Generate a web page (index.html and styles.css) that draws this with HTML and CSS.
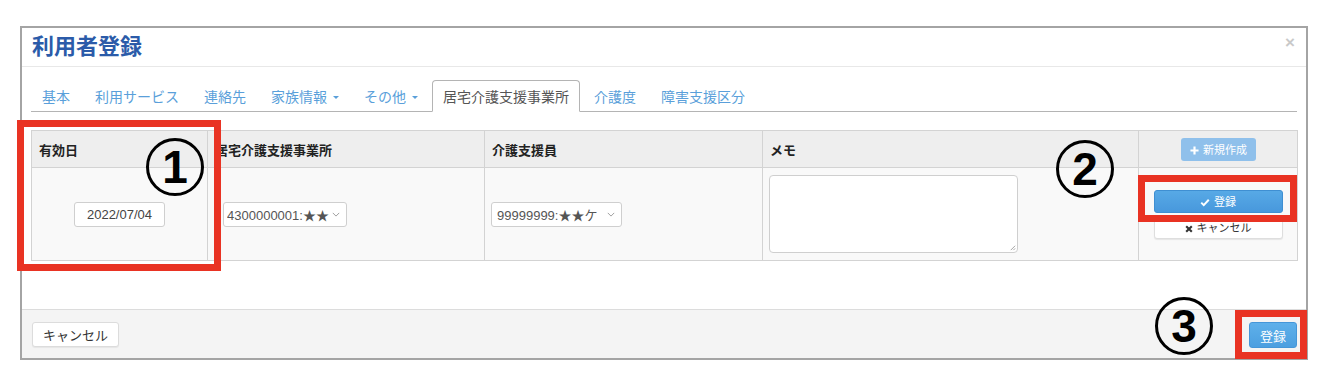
FILE: index.html
```html
<!DOCTYPE html>
<html lang="ja">
<head>
<meta charset="utf-8">
<title>利用者登録</title>
<link rel="stylesheet" href="styles.css">
</head>
<body>
<div class="modal">
  <div class="modal-header">
    <h1 class="title">利用者登録</h1>
    <span class="close">×</span>
  </div>
  <div class="modal-body">
    <ul class="tabs">
      <li><a>基本</a></li>
      <li><a>利用サービス</a></li>
      <li><a>連絡先</a></li>
      <li><a>家族情報<span class="caret"></span></a></li>
      <li><a>その他<span class="caret"></span></a></li>
      <li class="active"><a>居宅介護支援事業所</a></li>
      <li><a>介護度</a></li>
      <li><a>障害支援区分</a></li>
    </ul>
    <table class="grid">
      <colgroup>
        <col class="c1"><col class="c2"><col class="c3"><col class="c4"><col class="c5">
      </colgroup>
      <thead>
        <tr>
          <th>有効日</th>
          <th>居宅介護支援事業所</th>
          <th>介護支援員</th>
          <th>メモ</th>
          <th class="act"><button class="btn-new"><svg class="ico" viewBox="0 0 10 10" width="9" height="9"><path d="M5 0.5v9M0.5 5h9" stroke="#fff" stroke-width="2.4"/></svg>新規作成</button></th>
        </tr>
      </thead>
      <tbody>
        <tr>
          <td class="center"><div class="date">2022/07/04</div></td>
          <td><div class="select sel1"><span>4300000001:★★</span><svg viewBox="0 0 10 6" width="8" height="5"><path d="M1 1l4 4 4-4" fill="none" stroke="#888" stroke-width="1"/></svg></div></td>
          <td><div class="select sel2"><span>99999999:★★ケ</span><svg viewBox="0 0 10 6" width="8" height="5"><path d="M1 1l4 4 4-4" fill="none" stroke="#888" stroke-width="1"/></svg></div></td>
          <td><div class="memo"><svg class="grip" viewBox="0 0 8 8" width="7" height="7"><path d="M7 2L2 7M7 5L5 7" stroke="#999" stroke-width="1"/></svg></div></td>
          <td class="act">
            <div class="act-stack">
              <button class="btn-save"><svg class="ico" viewBox="0 0 12 10" width="10" height="9"><path d="M1.5 5.2l3 3 6-6.5" fill="none" stroke="#fff" stroke-width="2.4"/></svg>登録</button>
              <button class="btn-cancel"><svg class="ico" viewBox="0 0 10 10" width="8" height="8"><path d="M1.5 1.5l7 7M8.5 1.5l-7 7" stroke="#333" stroke-width="2.6"/></svg>キャンセル</button>
            </div>
          </td>
        </tr>
      </tbody>
    </table>
  </div>
  <div class="modal-footer">
    <button class="btn">キャンセル</button>
    <button class="btn btn-primary">登録</button>
  </div>
</div>

<div class="mark box1"></div>
<div class="mark box2"></div>
<div class="mark box3"></div>
<div class="num n1">1</div>
<div class="num n2">2</div>
<div class="num n3">3</div>
</body>
</html>
```

FILE: styles.css
```css
* { box-sizing: border-box; }
html, body { margin: 0; padding: 0; background: #fff; }
body {
  position: relative;
  width: 1328px;
  height: 380px;
  font-family: "Liberation Sans", "Noto Sans CJK JP", sans-serif;
  color: #333;
  overflow: hidden;
}

.modal {
  margin: 26px 0 0 20px;
  width: 1288px;
  height: 334px;
  border: 2px solid #a4a4a4;
  display: flex;
  flex-direction: column;
  background: #fff;
}

.modal-header {
  height: 39px;
  border-bottom: 1px solid #e8e8e8;
  padding: 1px 10px 0 10px;
  display: flex;
  justify-content: space-between;
  align-items: flex-start;
}
.title {
  margin: 0;
  font-size: 22px;
  line-height: 30px;
  font-weight: bold;
  color: #2b5ba9;
  font-family: "Noto Sans CJK JP", sans-serif;
}
.close {
  font-size: 17px;
  line-height: 28px;
  font-weight: bold;
  color: #c9c9c9;
  margin-right: 1px;
}

.modal-body {
  padding: 13px 9px 0 9px;
}

.tabs {
  list-style: none;
  margin: 0;
  padding: 0;
  display: flex;
  border-bottom: 1px solid #b4b4b4;
  height: 32px;
}
.tabs li { margin-right: 3px; }
.tabs a {
  display: block;
  line-height: 30px;
  padding: 0 10px;
  border: 1px solid transparent;
  border-radius: 4px 4px 0 0;
  font-size: 14px;
  color: #5a9fda;
  font-family: "Noto Sans CJK JP", sans-serif;
}
.tabs .active a {
  border-color: #b4b4b4;
  border-bottom-color: #fff;
  background: #fff;
  color: #555;
  height: 32px;
}
.caret {
  display: inline-block;
  width: 0;
  height: 0;
  margin-left: 6px;
  vertical-align: 3px;
  border-top: 3px solid #5a9fda;
  border-left: 3px solid transparent;
  border-right: 3px solid transparent;
}

.grid {
  margin-top: 18px;
  width: 1266px;
  border-collapse: collapse;
  table-layout: fixed;
}
.c1 { width: 176px; }
.c2 { width: 277px; }
.c3 { width: 278px; }
.c4 { width: 376px; }
.c5 { width: 159px; }
.grid th, .grid td {
  border: 1px solid #d3d3d3;
  vertical-align: middle;
}
.grid th {
  height: 37px;
  background: #eeeeee;
  text-align: left;
  padding: 0 7px;
  font-size: 13px;
  font-weight: bold;
  color: #222;
  font-family: "Noto Sans CJK JP", sans-serif;
}
.grid td {
  height: 93px;
  background: #f9f9f9;
  padding: 0 6px;
}
.grid .center { text-align: center; }
.grid .act { text-align: center; padding: 0; }

.date {
  display: inline-block;
  width: 91px;
  height: 25px;
  line-height: 23px;
  border: 1px solid #cfcfcf;
  border-radius: 3px;
  background: #fff;
  font-size: 13px;
  color: #444;
  text-align: center;
}

.select {
  display: inline-flex;
  align-items: center;
  justify-content: space-between;
  height: 25px;
  border: 1px solid #cfcfcf;
  border-radius: 3px;
  background: #fff;
  font-size: 13px;
  color: #555;
  padding: 0 6px 0 5px;
}
.select span { white-space: nowrap; overflow: hidden; }
.sel1 { width: 124px; margin-left: 9px; padding-left: 3px; }
.sel2 { width: 131px; margin-left: 0; }

.memo {
  position: relative;
  width: 249px;
  height: 78px;
  border: 1px solid #cfcfcf;
  border-radius: 4px;
  background: #fff;
}
.grip { position: absolute; right: 1px; bottom: 1px; }

.ico { margin-right: 4px; vertical-align: -1px; }

.btn-new {
  width: 75px;
  height: 23px;
  border: none;
  border-radius: 3px;
  background: #8fc0eb;
  color: #fff;
  font-size: 11px;
  font-family: "Noto Sans CJK JP", sans-serif;
  padding: 0;
  margin-left: 1px;
}
.act-stack {
  display: flex;
  flex-direction: column;
  align-items: center;
  gap: 3px;
}
.btn-save, .btn-cancel {
  width: 129px;
  height: 23px;
  border-radius: 3px;
  font-size: 11px;
  font-family: "Noto Sans CJK JP", sans-serif;
  padding: 0;
}
.btn-save {
  background: linear-gradient(#57a9e6, #4898dc);
  border: 1px solid #3f8fd2;
  color: #fff;
}
.btn-cancel {
  background: #fff;
  border: 1px solid #dedede;
  box-shadow: 0 1px 1px rgba(0,0,0,0.08);
  color: #333;
}

.modal-footer {
  margin-top: auto;
  height: 49px;
  border-top: 1px solid #dcdcdc;
  background: #f4f4f4;
  padding: 12px 9px 0 10px;
  display: flex;
  justify-content: space-between;
  align-items: flex-start;
}
.btn {
  height: 25px;
  padding: 0 10px;
  border: 1px solid #dcdcdc;
  border-radius: 3px;
  background: #fff;
  font-size: 13px;
  color: #333;
  font-family: "Noto Sans CJK JP", sans-serif;
  box-shadow: 0 1px 1px rgba(0,0,0,0.06);
}
.btn-primary {
  width: 48px;
  height: 26px;
  padding: 0;
  background: linear-gradient(#5eb0ea, #4c9fe0);
  border-color: #4596d8;
  color: #fff;
  box-shadow: none;
}

.mark {
  position: absolute;
  border: 7px solid #e93323;
}
.box1 { left: 17px; top: 120px; width: 204px; height: 151px; }
.box2 { left: 1138px; top: 175px; width: 159px; height: 47px; }
.box3 { left: 1235px; top: 310px; width: 72px; height: 49px; }

.num {
  position: absolute;
  width: 58px;
  height: 58px;
  border: 3px solid #000;
  border-radius: 50%;
  font-family: "Liberation Sans", sans-serif;
  font-weight: bold;
  font-size: 46px;
  line-height: 52px;
  text-align: center;
  color: #000;
}
.n1 { left: 146px; top: 138px; }
.n2 { left: 1056px; top: 140px; }
.n3 { left: 1155px; top: 297px; }
```
